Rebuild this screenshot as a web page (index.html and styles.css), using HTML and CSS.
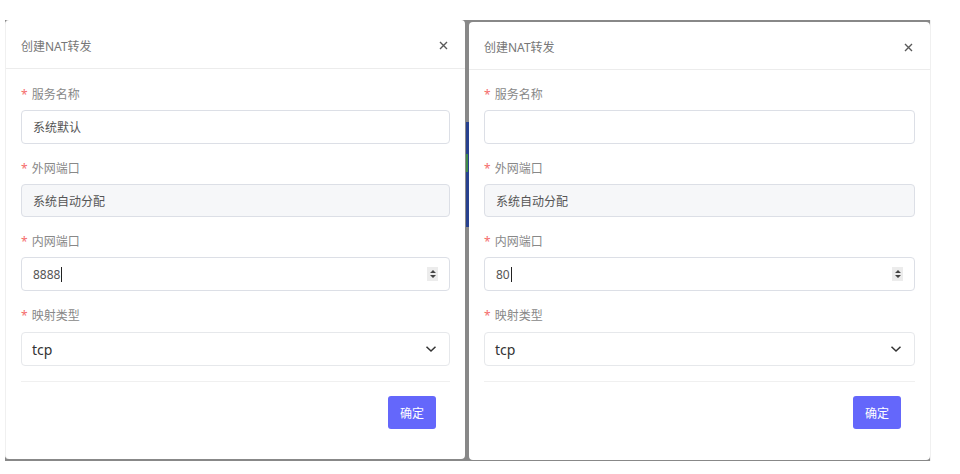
FILE: index.html
```html
<!DOCTYPE html>
<html lang="zh-CN">
<head>
    <meta charset="UTF-8">
    <meta name="viewport" content="width=device-width, initial-scale=1.0">
    <title>创建NAT转发</title>
    <link rel="stylesheet" href="styles.css">
</head>
<body>
    <div class="backdrop">
        <div class="dialog dialog-left">
            <div class="dialog-header">
                <span class="dialog-title">创建NAT转发</span>
                <svg class="close" width="9" height="9" viewBox="0 0 9 9"><path d="M1 1 L8 8 M8 1 L1 8" stroke="#5a5a5a" stroke-width="1.4"/></svg>
            </div>
            <div class="dialog-body">
                <div class="form-item">
                    <div class="label"><span class="req">*</span>服务名称</div>
                    <div class="field">系统默认</div>
                </div>
                <div class="form-item">
                    <div class="label"><span class="req">*</span>外网端口</div>
                    <div class="field disabled">系统自动分配</div>
                </div>
                <div class="form-item">
                    <div class="label"><span class="req">*</span>内网端口</div>
                    <div class="field number">
                        <span>8888<span class="caret"></span></span>
                        <span class="spin">
                            <svg width="8" height="10" viewBox="0 0 8 10"><path d="M4 1 L7 4 H1 Z M4 9 L7 6 H1 Z" fill="#444"/></svg>
                        </span>
                    </div>
                </div>
                <div class="form-item last">
                    <div class="label"><span class="req">*</span>映射类型</div>
                    <div class="field select">
                        <span>tcp</span>
                        <svg width="12" height="8" viewBox="0 0 12 8"><path d="M1.5 1.8 L6 6 L10.5 1.8" fill="none" stroke="#333" stroke-width="1.5"/></svg>
                    </div>
                </div>
            </div>
            <div class="dialog-footer">
                <button class="btn-primary">确定</button>
            </div>
        </div>

        <div class="gutter"><div class="strip"><div class="strip-green"></div></div></div>

        <div class="dialog dialog-right">
            <div class="dialog-header">
                <span class="dialog-title">创建NAT转发</span>
                <svg class="close" width="9" height="9" viewBox="0 0 9 9"><path d="M1 1 L8 8 M8 1 L1 8" stroke="#5a5a5a" stroke-width="1.4"/></svg>
            </div>
            <div class="dialog-body">
                <div class="form-item">
                    <div class="label"><span class="req">*</span>服务名称</div>
                    <div class="field"></div>
                </div>
                <div class="form-item">
                    <div class="label"><span class="req">*</span>外网端口</div>
                    <div class="field disabled">系统自动分配</div>
                </div>
                <div class="form-item">
                    <div class="label"><span class="req">*</span>内网端口</div>
                    <div class="field number">
                        <span>80<span class="caret"></span></span>
                        <span class="spin">
                            <svg width="8" height="10" viewBox="0 0 8 10"><path d="M4 1 L7 4 H1 Z M4 9 L7 6 H1 Z" fill="#444"/></svg>
                        </span>
                    </div>
                </div>
                <div class="form-item last">
                    <div class="label"><span class="req">*</span>映射类型</div>
                    <div class="field select">
                        <span>tcp</span>
                        <svg width="12" height="8" viewBox="0 0 12 8"><path d="M1.5 1.8 L6 6 L10.5 1.8" fill="none" stroke="#333" stroke-width="1.5"/></svg>
                    </div>
                </div>
            </div>
            <div class="dialog-footer">
                <button class="btn-primary">确定</button>
            </div>
        </div>
    </div>
</body>
</html>
```

FILE: styles.css
```css
body {
    font-family: "Noto Sans", "Noto Sans CJK SC", sans-serif;
    margin: 0;
    padding: 20px 0 0 5px;
    background-color: #fff;
}
.backdrop {
    display: flex;
    align-items: flex-start;
    width: 925px;
    height: 441px;
    background-color: #888;
    box-shadow: 1px 0 0 #f0f0f0;
}
.dialog {
    background-color: #fff;
    border-radius: 4px;
    display: flex;
    flex-direction: column;
    box-sizing: border-box;
}
.dialog-left {
    width: 460px;
    height: 439px;
    border-left: 1px solid #f0f0f0;
}
.dialog-right {
    width: 461px;
    height: 438px;
    margin-top: 2px;
}
.gutter {
    width: 4px;
    height: 441px;
    padding-top: 102px;
    box-sizing: border-box;
}
.strip {
    margin-left: 1px;
    width: 3px;
    height: 105px;
    background-color: #27418f;
    padding-top: 32px;
    box-sizing: border-box;
}
.strip-green {
    width: 2px;
    height: 18px;
    background-color: #3d8a4a;
}
.dialog-header {
    display: flex;
    justify-content: space-between;
    align-items: center;
    height: 49px;
    padding: 3px 17px 0 15px;
    box-sizing: border-box;
    border-bottom: 1px solid #ececec;
}
.dialog-right .dialog-header {
    height: 48px;
}
.dialog-title {
    font-size: 12px;
    color: #777;
}
.dialog-body {
    padding: 18px 15px 0 15px;
}
.dialog-right .dialog-body {
    padding-top: 17px;
}
.form-item {
    margin-bottom: 17px;
}
.form-item.last {
    margin-bottom: 15px;
}
.label {
    font-size: 12px;
    color: #888;
    line-height: 16px;
    margin-bottom: 7px;
}
.form-item.last .label {
    margin-bottom: 8px;
}
.req {
    color: #f56c6c;
    margin-right: 4px;
}
.field {
    height: 34px;
    border: 1px solid #dcdfe6;
    border-radius: 4px;
    box-sizing: border-box;
    padding: 0 11px;
    display: flex;
    align-items: center;
    justify-content: space-between;
    font-size: 12px;
    color: #555;
}
.field.disabled {
    background-color: #f6f7f9;
    height: 33px;
    margin-top: 1px;
}
.caret {
    display: inline-block;
    width: 1px;
    height: 15px;
    background-color: #222;
    vertical-align: -3px;
    margin-left: 1px;
}
.spin {
    width: 11px;
    height: 14px;
    background-color: #ececec;
    display: flex;
    align-items: center;
    justify-content: center;
}
.field.select {
    border-color: #e6e8eb;
    font-size: 14px;
    color: #333;
    padding-left: 10px;
    padding-right: 12px;
}
.dialog-footer {
    margin: 0 15px;
    padding-top: 14px;
    border-top: 1px solid #f0f0f0;
    display: flex;
    justify-content: flex-end;
}
.btn-primary {
    font-family: "Noto Sans CJK SC", sans-serif;
    width: 48px;
    height: 33px;
    margin-right: 14px;
    border: none;
    border-radius: 3px;
    background-color: #6467fb;
    color: #fff;
    font-size: 12px;
    padding: 0;
}
```
